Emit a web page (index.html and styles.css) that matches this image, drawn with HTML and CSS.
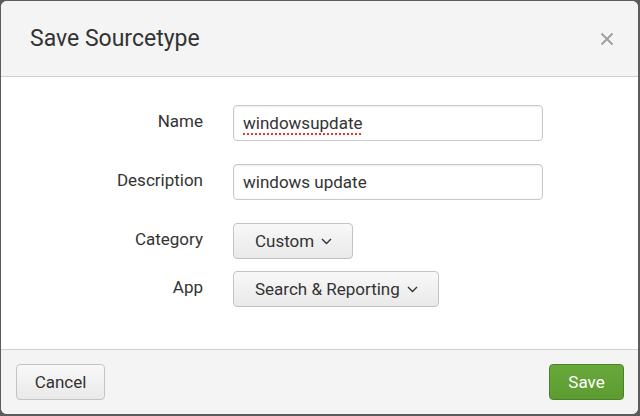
FILE: index.html
```html
<!DOCTYPE html>
<html>
<head>
<meta charset="utf-8">
<link rel="stylesheet" href="styles.css">
</head>
<body>
<div class="modal">
  <div class="modal-header">
    <h3 class="modal-title">Save Sourcetype</h3>
    <span class="close">
      <svg width="14" height="14" viewBox="0 0 14 14"><path d="M1.5 1.5 L12.5 12.5 M12.5 1.5 L1.5 12.5" stroke="#a0a0a0" stroke-width="2" fill="none"/></svg>
    </span>
  </div>
  <div class="modal-body">
    <div class="row">
      <label class="label">Name</label>
      <div class="input"><span class="misspelled">windowsupdate</span></div>
    </div>
    <div class="row">
      <label class="label">Description</label>
      <div class="input">windows update</div>
    </div>
    <div class="row row-tight">
      <label class="label">Category</label>
      <button class="btn btn-dropdown">Custom <svg class="caret" width="11" height="7" viewBox="0 0 11 7"><path d="M1 1 L5.5 5.5 L10 1" stroke="#333" stroke-width="1.4" fill="none"/></svg></button>
    </div>
    <div class="row">
      <label class="label">App</label>
      <button class="btn btn-dropdown">Search &amp; Reporting <svg class="caret" width="11" height="7" viewBox="0 0 11 7"><path d="M1 1 L5.5 5.5 L10 1" stroke="#333" stroke-width="1.4" fill="none"/></svg></button>
    </div>
  </div>
  <div class="modal-footer">
    <button class="btn btn-cancel">Cancel</button>
    <button class="btn btn-primary">Save</button>
  </div>
</div>
</body>
</html>
```

FILE: styles.css
```css
html, body {
  margin: 0;
  padding: 0;
}
body {
  width: 640px;
  height: 416px;
  background: #5c5c5c;
  font-family: Roboto, "Liberation Sans", sans-serif;
  color: #333;
  overflow: hidden;
}
.modal {
  margin: 1px 2px 0 1px;
  height: 413px;
  background: #fff;
  border-radius: 6px;
  display: flex;
  flex-direction: column;
  overflow: hidden;
}
.modal-header {
  height: 75px;
  flex: none;
  background: #f4f4f4;
  border-bottom: 1px solid #d0d0d0;
  display: flex;
  align-items: center;
  justify-content: space-between;
  padding: 0 24px 0 29px;
}
.modal-title {
  margin: 0;
  font-weight: 400;
  font-size: 23px;
  color: #333;
}
.close {
  display: flex;
}
.modal-body {
  flex: 1;
  padding: 28px 0 0 42px;
  display: flex;
  flex-direction: column;
}
.row {
  display: flex;
  align-items: center;
  margin-bottom: 23px;
}
.row-tight {
  margin-bottom: 12px;
}
.label {
  width: 160px;
  text-align: right;
  margin-right: 30px;
  font-size: 17px;
  color: #333;
  margin-top: -4px;
}
.input {
  box-sizing: border-box;
  width: 310px;
  height: 36px;
  border: 1px solid #c8c8c8;
  border-radius: 4px;
  box-shadow: inset 0 1px 2px rgba(0,0,0,0.08);
  padding: 0 9px;
  font-size: 17px;
  line-height: 34px;
  color: #333;
}
.misspelled {
  text-decoration: underline dotted #e33;
  text-decoration-thickness: 2px;
  text-underline-offset: 4px;
}
.btn {
  box-sizing: border-box;
  height: 36px;
  border-radius: 4px;
  font-family: Roboto, "Liberation Sans", sans-serif;
  font-size: 17px;
  color: #333;
  border: 1px solid #c3c3c3;
  background: linear-gradient(#f8f8f8, #e9e9e9);
  padding: 0 19px;
  display: inline-flex;
  align-items: center;
}
.btn-dropdown {
  padding: 0 20px 0 21px;
}
.caret {
  margin-left: 7px;
}
.modal-footer {
  flex: none;
  height: 65px;
  box-sizing: border-box;
  background: #f4f4f4;
  border-top: 1px solid #d0d0d0;
  display: flex;
  align-items: center;
  justify-content: space-between;
  padding: 0 14px 0 15px;
}
.btn-cancel {
  width: 89px;
  justify-content: center;
}
.btn-primary {
  width: 75px;
  justify-content: center;
  color: #fff;
  background: linear-gradient(#68a83b, #5c9c30);
  border-color: #4a8226;
}
```
